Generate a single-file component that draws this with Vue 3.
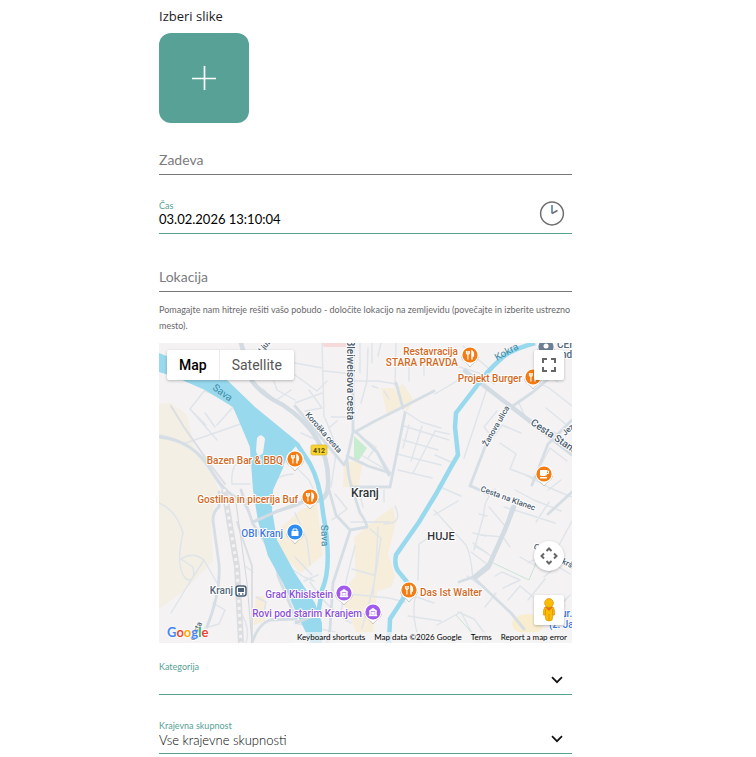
<script setup>
import { ref } from 'vue'

const subject = ref('')
const time = ref('03.02.2026 13:10:04')
const place = ref('')
const category = ref('')
const community = ref('all')
const mapType = ref('Map')

const minorRoads = [
  'M0 92 Q32 96 54 132 T80 153 L90 170',
  'M27 100 L96 76 M46 47 L31 66 L58 97 M31 66 L47 82 M46 70 L56 84 M74 64 L58 82',
  'M46 48 Q76 58 80 76 Q92 96 92 112 L95 147',
  'M76 122 Q72 130 73 141 H91 M76 122 Q82 118 91 122 M112 141 Q118 132 134 131 M124 99 L137 112',
  'M110 24 L118 47 L136 57 M104 46 L116 58 L132 47 M136 32 L158 48 L168 38 M136 60 L163 50 M150 47 L163 65 L146 68 M163 0 L165 74 M165 28 L194 31 M136 20 L163 25 M172 74 H194',
  'M209 5 L208 38 L202 60 M194 38 H219 L237 41 M237 0 L236 42 M213 0 V20 M250 23 V38 M265 14 V32 M225 48 L230 56 M213 43 L219 45',
  'M196 89 L215 103 L231 129 L202 112 M209 115 L217 104 M245 68 L262 79 L282 85 M245 83 L290 97 M244 97 L279 107 M238 111 L282 122 M239 127 L273 135 M250 82 L244 105 M263 83 L252 118 M276 88 L254 130',
  'M166 75 L180 110 M170 85 L178 78 M136 123 L150 137 L157 152 M177 111 L172 144 M201 0 V30 M222 0 L219 13 M142 90 L160 98',
  'M0 160 Q18 168 24 190 Q16 224 27 236 Q37 240 34 224 L22 216 Q34 208 45 217 L58 240 M45 217 L29 242 L12 270',
  'M54 260 L66 267 L60 281 L46 285 M80 267 Q92 284 87 300 M97 254 L107 259 L104 274 M86 223 L94 229',
  'M122 219 L145 234 L155 238 M136 170 L148 197 L151 222 M136 214 L153 232 M159 232 L145 238',
  'M176 151 L188 166 L173 177 M200 147 L204 164 M192 179 H231 M211 186 L222 195 Q218 223 215 240 Q210 263 203 285 M219 184 Q218 218 214 251 M193 226 L215 232 M190 251 L230 255 L246 259 M196 203 L188 234 L182 269',
  'M225 159 L225 147 M236 163 Q245 181 225 181 M136 280 L184 291 M151 239 Q172 270 192 280 M202 270 L214 274',
  'M275 167 L307 202 Q312 212 314 237 M259 237 L260 201 L274 192 M246 250 L275 260 M249 273 L282 278 M257 249 Q251 276 262 300 M279 143 L302 153 M330 164 L346 183 M322 192 L344 194 L351 204 M312 209 L328 221 M314 200 L332 213 M308 233 L321 242',
  'M294 22 L320 30 L335 41 M304 3 L329 25 M298 38 L276 51 M305 115 L328 45 M338 68 L325 84 L334 95 L343 82 L362 90 M341 100 L357 111 L351 126 L375 135 L391 105 L408 118 M360 60 L367 76 L400 92 M276 88 L290 91 M276 112 L292 119 M367 33 L390 45 L413 63 M376 24 L399 39 M387 65 L409 83',
  'M275 172 L299 158 M336 146 Q324 158 325 171 L315 207 M320 171 L328 173 M314 190 L327 193 M315 203 L328 210 M345 164 L365 170 L396 180 M356 147 L375 157 L402 168 M368 133 L391 145 L413 154 M377 179 L390 159 M369 220 L399 204 L413 178',
  'M336 233 L343 229 L361 237 L344 245 M349 257 L361 243 L394 270 M299 269 L315 276 L327 292 L314 296 M278 282 L302 269 L318 300 M337 250 L326 264 M385 234 L398 223 L411 231 M369 257 L386 236 M361 214 L377 223 M389 147 L402 137 M411 252 L385 280'
]
const majorRoads = [
  'M0 94 Q34 97 52 127 T87 157 M60 149 L60 164 Q54 168 54 178 L60 221 Q62 248 48 284',
  'M82 147 L94 181 Q118 215 119 233 L137 276 M94 179 L119 168 L136 163 L151 156',
  'M194 0 L194 89 L188 116 Q189 134 193 145 M188 116 L185 122 L136 63 M196 89 L216 78 L244 64 L275 48',
  'M192 142 L201 170 Q207 178 208 184 L191 187 L177 172 L169 143 M191 188 L174 240 L171 286 L168 300 M193 144 H231 L246 70 M237 40 L244 65 M196 88 L218 109 L230 132',
  'M311 143 L326 104 L345 69 L374 49 L394 32 M312 143 L329 151 M373 142 L389 101 L413 77 M389 171 L413 149',
  'M355 163 L331 220 L314 234 L300 239 M353 164 L346 187 L330 225 L316 236 L352 270 L365 286 M93 300 Q99 281 111 277 L137 276 M188 113 L209 123 L231 130'
]
const pins = [
  { x: 311, y: 12, color: '#f57c13', kind: 'food' },
  { x: 374, y: 34, color: '#f57c13', kind: 'food' },
  { x: 136, y: 116, color: '#f57c13', kind: 'food' },
  { x: 151, y: 154, color: '#f57c13', kind: 'food' },
  { x: 250, y: 247, color: '#f57c13', kind: 'food' },
  { x: 385, y: 131, color: '#f57c13', kind: 'cup' },
  { x: 136, y: 189, color: '#2e8cf0', kind: 'shop' },
  { x: 185, y: 250, color: '#a259ee', kind: 'museum' },
  { x: 214, y: 269, color: '#a259ee', kind: 'museum' },
  { x: 387, y: 4, color: '#6d7f92', kind: 'dot' }
]
</script>

<template>
  <main class="page">
    <form class="form" @submit.prevent>
      <p class="caption" id="images-caption">Izberi slike</p>
      <button class="add" type="button" aria-labelledby="images-caption">
        <svg width="24" height="24" viewBox="0 0 24 24"><path d="M12.500 0V24M0 12.500H24" stroke="#fff" stroke-width="1.700" /></svg>
      </button>

      <div class="field first">
        <label class="resting" for="subject">Zadeva</label>
        <input id="subject" v-model="subject" type="text" />
      </div>
      <div class="field active">
        <label for="time">Čas</label>
        <input id="time" v-model="time" type="text" />
        <svg class="clock" width="26" height="26" viewBox="0 0 26 26" fill="none" stroke="#6e6e70">
          <circle cx="13" cy="13.5" r="11.4" stroke-width="1.5" />
          <path d="M13 5V13.500" stroke="#5d87b4" stroke-width="1.700" />
          <path d="M13 13.500L18.500 10.500" stroke-width="1.500" />
        </svg>
      </div>

      <section class="location">
        <div class="field">
          <label class="resting" for="place">Lokacija</label>
          <input id="place" v-model="place" type="text" />
        </div>
        <p class="hint">Pomagajte nam hitreje rešiti vašo pobudo - določite lokacijo na zemljevidu (povečajte in izberite ustrezno mesto).</p>

        <div class="map">
          <svg class="canvas" viewBox="0 0 413 300" preserveAspectRatio="xMidYMid slice">
            <rect width="413" height="300" fill="#f4f2f3" />
            <path d="M0 61L12 60L28 72L36 108L54 133L60 148L55 162L52 180L54 218L26 247L0 266Z" fill="#f3efe4" />
            <path d="M143 166L158 161L164 212L142 230L120 209L119 187Z" fill="#f6edda" />
            <path d="M97 253L106 253V278L95 282Z M222 45L235 45L246 63L228 71Z M238 44L244 41L254 56L248 69Z M185 119L204 118L199 144H184Z" fill="#f6edda" />
            <path d="M212 180L234 164L237 178L229 211L236 233L232 244L218 248L214 290L198 291L181 251L197 233L195 195Z" fill="#f6edda" />
            <ellipse cx="369" cy="281" rx="16" ry="10" fill="#f8edcf" />
            <path d="M162 0H187V4H165Z" fill="#f5dad9" />
            <path d="M195 93L208 105L200 117L195 116Z" fill="#c8ecd0" />

            <g fill="none" stroke-linecap="round" stroke-linejoin="round">
              <path v-for="(d, i) in minorRoads" :key="'m' + i" :d="d" stroke="#dee4ea" stroke-width="1.4" />
              <path v-for="(d, i) in majorRoads" :key="'M' + i" :d="d" stroke="#d6dee5" stroke-width="2.8" />
              <path d="M306 28L319 38L372 79L413 111" stroke="#d3dbe3" stroke-width="4.5" />
              <path d="M355 164L346 187L330 222L316 234" stroke="#d3dbe3" stroke-width="4.500" />
              <path d="M82 0L93 38Q103 52 124 62Q172 94 169 143Q168 158 155 158" stroke="#d3dbe3" stroke-width="4.500" />
              <path d="M12 63L25 84L50 120L66 141M78 179L93 223V300" stroke="#dcdee2" stroke-width="2" />
              <path d="M65 146L78 224L82 300" stroke="#dbdde0" stroke-width="6" stroke-linecap="butt" />
              <path d="M65 146L78 224L82 300" stroke="#f4f2f3" stroke-width="3" stroke-dasharray="3 4" stroke-linecap="butt" />
              <path d="M77 160L88 240L93 300" stroke="#d3d6da" stroke-width="1" />
              <path d="M332 219L370 237L377 220M297 272L322 300" stroke="#c9e5d5" />
            </g>

            <path d="M0 10L68 37L96 64L140 100Q126 113 124 125L114 147L113 167L118 197L136 230L156 260L163 280V300H152L136 267L124 240L109 213L99 178L94 147L91 104L74 64L46 47L16 34L0 29Z" fill="#98d9ed" />
            <path d="M138 101L151 121Q161 139 164 170Q174 222 163 247L158 278" fill="none" stroke="#98d9ed" stroke-width="4.5" />
            <path d="M376 0Q351 7 343 15Q327 29 317 44L297 70L296 84L299 112L292 124L277 151L260 179L237 212Q235 222 239 228L249 240L244 256L231 276L230 300" fill="none" stroke="#98d9ed" stroke-width="4.5" />
            <path d="M98 95Q102 89 106 96L104 110Q99 116 97 108Z" fill="#f4f2f3" />
            <path d="M94 179L119 168L151 156M136 280L164 269" fill="none" stroke="#d3dbe3" stroke-width="3" />

            <g v-for="(p, i) in pins" :key="i" :transform="`translate(${p.x} ${p.y})`">
              <path d="M-8.600 2Q-8 6 -3 8.500L0 12L3 8.500Q8 6 8.600 2Z" fill="#fff" stroke="#a7a4a3" stroke-width=".6" />
              <circle r="8.700" fill="#fff" />
              <circle r="7.600" :fill="p.color" />
              <g v-if="p.kind === 'food'" fill="none" stroke="#fff">
                <path d="M-3.500 -4V-1.500Q-2 .5 -.7 -1.500V-4M-2.100 -4V4.500" stroke-width="1.100" />
                <path d="M2 4.500V-4Q4 -2.500 3.200 1H2" stroke-width="1.500" />
              </g>
              <g v-else-if="p.kind === 'cup'">
                <path d="M-4 -4H3V0Q3 2-1 2T-4 0ZM-4 3H3V4.500H-4Z" fill="#fff" />
                <path d="M3 -3H4.500V-.5H3" fill="none" stroke="#fff" />
              </g>
              <g v-else-if="p.kind === 'shop'">
                <path d="M-3.500 -1H3.500V4H-3.500Z" fill="#fff" /><path d="M-2 0V-3H2V0" fill="none" stroke="#fff" />
              </g>
              <path v-else-if="p.kind === 'museum'" d="M-4 -1L0 -4L4 -1ZM-4 3H4V4H-4ZM-3.500 -1H-2.200V3H-3.500ZM2.200 -1H3.500V3H2.200ZM-1.500 0H1.500V2.500H-1.500Z" fill="#fff" stroke="#fff" stroke-width=".4" />
              <circle v-else cy="-1" r="2.500" fill="#fff" />
            </g>

            <g transform="translate(82 248)">
              <rect x="-5" y="-5" width="10" height="10" rx="2.500" fill="#fff" stroke="#4b6179" stroke-width="1.500" />
              <rect x="-3" y="-3" width="6" height="4" fill="#4b6179" /><path d="M-2.500 3H-1M1 3H2.500" stroke="#4b6179" stroke-width="1.500" />
            </g>
            <rect x="152" y="102" width="16" height="10" rx="1.500" fill="#f8d431" stroke="#d5b52b" stroke-width=".7" />
            <text class="shield" x="160" y="110">412</text>

            <g class="place food">
              <text x="299" y="12" text-anchor="end">Restavracija</text>
              <text x="299" y="23" text-anchor="end">STARA PRAVDA</text>
              <text x="363" y="39" text-anchor="end">Projekt Burger</text>
              <text x="124" y="121" text-anchor="end">Bazen Bar &amp; BBQ</text>
              <text x="139" y="160" text-anchor="end">Gostilna in picerija Buf</text>
              <text x="261" y="253">Das Ist Walter</text>
            </g>
            <g class="place shop">
              <text x="124" y="194" text-anchor="end">OBI Kranj</text>
              <text x="402" y="274">ur.</text>
              <text x="390" y="285">(z. Ja</text>
            </g>
            <g class="place museum">
              <text x="174" y="255" text-anchor="end">Grad Khislstein</text>
              <text x="203" y="274" text-anchor="end">Rovi pod starim Kranjem</text>
            </g>
            <g class="place grey">
              <text x="74" y="251" text-anchor="end">Kranj</text>
              <text x="398" y="5">CEN</text>
              <text x="402" y="15">nd</text>
            </g>
            <g class="town">
              <text x="206" y="154" text-anchor="middle">Kranj</text>
              <text class="district" x="282" y="197" text-anchor="middle">HUJE</text>
            </g>
            <g class="road">
              <text transform="translate(188 -3) rotate(90)">Bleiweisova cesta</text>
              <text class="small" transform="translate(146 72) rotate(49)">Koroška cesta</text>
              <text class="small" transform="translate(328 104) rotate(-60)">Žanova ulica</text>
              <text transform="translate(371 81) rotate(34)">Cesta Staneta</text>
              <text class="small" transform="translate(321 148) rotate(20)">Cesta na Klanec</text>
              <text class="small" transform="translate(406 93) rotate(-42)">Jezerska</text>
              <text class="small" transform="translate(374 205) rotate(28)">Cesta Kokrškega</text>
              <text class="small" transform="translate(103 10) rotate(-50)">Ljubljanska</text>
              <text class="small" transform="translate(35 298) rotate(-65)">cesta</text>
            </g>
            <g class="water">
              <text transform="translate(53 46) rotate(36)">Sava</text>
              <text transform="translate(162 182) rotate(88)">Sava</text>
              <text transform="translate(338 18) rotate(-29)">Kokra</text>
            </g>
          </svg>

          <div class="types">
            <button type="button" :class="{ on: mapType === 'Map' }" @click="mapType = 'Map'">Map</button>
            <button type="button" :class="{ on: mapType === 'Satellite' }" @click="mapType = 'Satellite'">Satellite</button>
          </div>
          <button class="control full" type="button" aria-label="Toggle fullscreen view">
            <svg width="14" height="14" viewBox="0 0 14 14" fill="none" stroke="#666" stroke-width="2"><path d="M1 5V1H5M9 1H13V5M13 9V13H9M5 13H1V9" /></svg>
          </button>
          <button class="control pan" type="button" aria-label="Map camera controls">
            <svg width="18" height="18" viewBox="0 0 18 18" fill="none" stroke="#666" stroke-width="2"><path d="M6.500 4L9 1.500L11.500 4M14 6.500L16.500 9L14 11.500M11.500 14L9 16.500L6.500 14M4 11.500L1.500 9L4 6.500" /></svg>
          </button>
          <button class="control pegman" type="button" aria-label="Street View Pegman">
            <svg width="16" height="24" viewBox="0 0 16 24">
              <path d="M4 9Q8 7 12 9Q14 11 13.500 17H12L11 22Q8 24 5 22L4 17H2.500Q2 11 4 9Z" fill="#fbbc04" stroke="#db9300" stroke-width=".7" />
              <path d="M4 9L8 13L12 9Z" fill="#e7711b" /><path d="M4.500 11V17M11.500 11V17M8 16V22" stroke="#d99200" stroke-width=".8" />
              <circle cx="8" cy="5" r="4.400" fill="#fbbc04" stroke="#db9300" stroke-width=".7" />
            </svg>
          </button>
          <a class="google" href="#" aria-label="Google"><span class="b">G</span><span class="r">o</span><span class="y">o</span><span class="b">g</span><span class="g">l</span><span class="r">e</span></a>
          <div class="legal">
            <button type="button">Keyboard shortcuts</button>
            <span>Map data ©2026 Google</span>
            <a href="#">Terms</a>
            <a href="#">Report a map error</a>
          </div>
        </div>
      </section>

      <div class="field active category">
        <label for="category">Kategorija</label>
        <select id="category" v-model="category"><option value=""></option></select>
        <svg class="chevron" width="12" height="8" viewBox="0 0 12 8" fill="none" stroke="#111" stroke-width="1.700"><path d="M1 1.200L6 6.200L11 1.200" /></svg>
      </div>
      <div class="field active">
        <label for="community">Krajevna skupnost</label>
        <select id="community" v-model="community"><option value="all">Vse krajevne skupnosti</option></select>
        <svg class="chevron" width="12" height="8" viewBox="0 0 12 8" fill="none" stroke="#111" stroke-width="1.700"><path d="M1 1.200L6 6.200L11 1.200" /></svg>
      </div>
    </form>
  </main>
</template>

<style>
body {
  background: #fff;
}
</style>

<style scoped>
* {
  box-sizing: border-box;
}
.page {
  display: grid;
  grid-template-columns: 159fr 413fr 184fr;
  font-family: "Open Sans", sans-serif;
}
.form {
  grid-column: 2;
  min-width: 0;
  padding-top: 6px;
}
button,
input,
select {
  margin: 0;
  padding: 0;
  border: 0;
  background: none;
  font: inherit;
  color: inherit;
}
p {
  margin: 0;
}
.caption {
  height: 27px;
  font-size: 13px;
  line-height: 20px;
  color: #1b1b1f;
}
.add {
  display: grid;
  place-items: center;
  width: 90px;
  height: 90px;
  border-radius: 12px;
  background: #57a196;
}
.field {
  display: grid;
  align-items: start;
  margin-top: 23px;
  border-bottom: 1px solid #77777a;
}
.field > * {
  grid-area: 1 / 1;
}
.field.active {
  border-color: #57a196;
}
.field.first {
  margin-top: 16px;
}
.field label {
  padding-top: 1px;
  font-family: Lato, sans-serif;
  font-size: 9px;
  line-height: 14px;
  color: #57a196;
}
.field .resting {
  padding-top: 10px;
  font-size: 14px;
  line-height: 22px;
  color: #7b7b7e;
}
.field input,
.field select {
  width: 100%;
  min-width: 0;
  height: 35px;
  padding: 10px 0 4px;
  outline: none;
  appearance: none;
  font-family: Lato, sans-serif;
  font-size: 13px;
  color: #000;
}
.field select {
  padding: 10px 0 2px;
  font-weight: 300;
}
.clock {
  justify-self: end;
  margin: 2px 7px 0 0;
}
.chevron {
  justify-self: end;
  margin: 17px 9px 0 0;
}
.location {
  margin-top: 22px;
}
.location .field {
  margin-top: 0;
}
.hint {
  padding: 10px 0 9px;
  font-family: Lato, sans-serif;
  font-size: 9px;
  line-height: 16px;
  color: #68686b;
}
.map {
  position: relative;
  height: 300px;
  overflow: hidden;
  font-family: Roboto, sans-serif;
}
.canvas {
  display: block;
  width: 100%;
  height: 100%;
}
.canvas text {
  paint-order: stroke;
  stroke: #fff;
  stroke-width: 2px;
  stroke-linejoin: round;
}
.place {
  font-size: 10px;
  font-weight: 500;
}
.food {
  fill: #d2691e;
}
.shop {
  fill: #3f78e0;
}
.museum {
  fill: #8c50d8;
}
.grey {
  fill: #53687d;
}
.town {
  font-size: 12px;
  font-weight: 500;
  fill: #2e3338;
}
.town .district {
  font-size: 11px;
}
.road {
  font-size: 10px;
  font-weight: 500;
  fill: #4c5c6e;
}
.road .small {
  font-size: 8px;
}
.canvas .water text {
  font-size: 10px;
  fill: #3d8ba6;
  stroke: none;
}
.canvas .shield {
  font-size: 7px;
  font-weight: 700;
  text-anchor: middle;
  fill: #574c14;
  stroke: none;
}
.types {
  position: absolute;
  top: 7px;
  left: 8px;
  display: flex;
  border-radius: 2px;
  background: #fff;
  box-shadow: 0 1px 3px rgba(0, 0, 0, 0.25);
}
.types button {
  height: 30px;
  padding: 0 12px;
  font-size: 14px;
  color: #565656;
}
.types button + button {
  border-left: 1px solid #ebebeb;
}
.types .on {
  font-weight: 500;
  color: #000;
}
.control {
  position: absolute;
  right: 8px;
  display: grid;
  place-items: center;
  width: 30px;
  height: 30px;
  border-radius: 2px;
  background: #fff;
  box-shadow: 0 1px 3px rgba(0, 0, 0, 0.25);
}
.full {
  top: 7px;
}
.pan {
  bottom: 72px;
  border-radius: 50%;
}
.pegman {
  bottom: 18px;
}
.google {
  position: absolute;
  bottom: 2px;
  left: 8px;
  font-family: Lato, sans-serif;
  font-size: 13px;
  font-weight: 700;
  line-height: 18px;
  text-decoration: none;
  text-shadow: 0 0 2px #fff, 0 0 2px #fff;
}
.b { color: #4285f4; }
.r { color: #ea4335; }
.y { color: #f9ab00; }
.g { color: #34a853; }
.legal {
  position: absolute;
  right: 0;
  bottom: 0;
  display: flex;
  gap: 9px;
  padding: 0 5px;
  background: rgba(245, 245, 245, 0.7);
  font-family: Lato, sans-serif;
  font-size: 8px;
  line-height: 11px;
  color: #000;
}
.legal a {
  color: inherit;
  text-decoration: none;
}
.field.category {
  margin-top: 16px;
}
</style>
